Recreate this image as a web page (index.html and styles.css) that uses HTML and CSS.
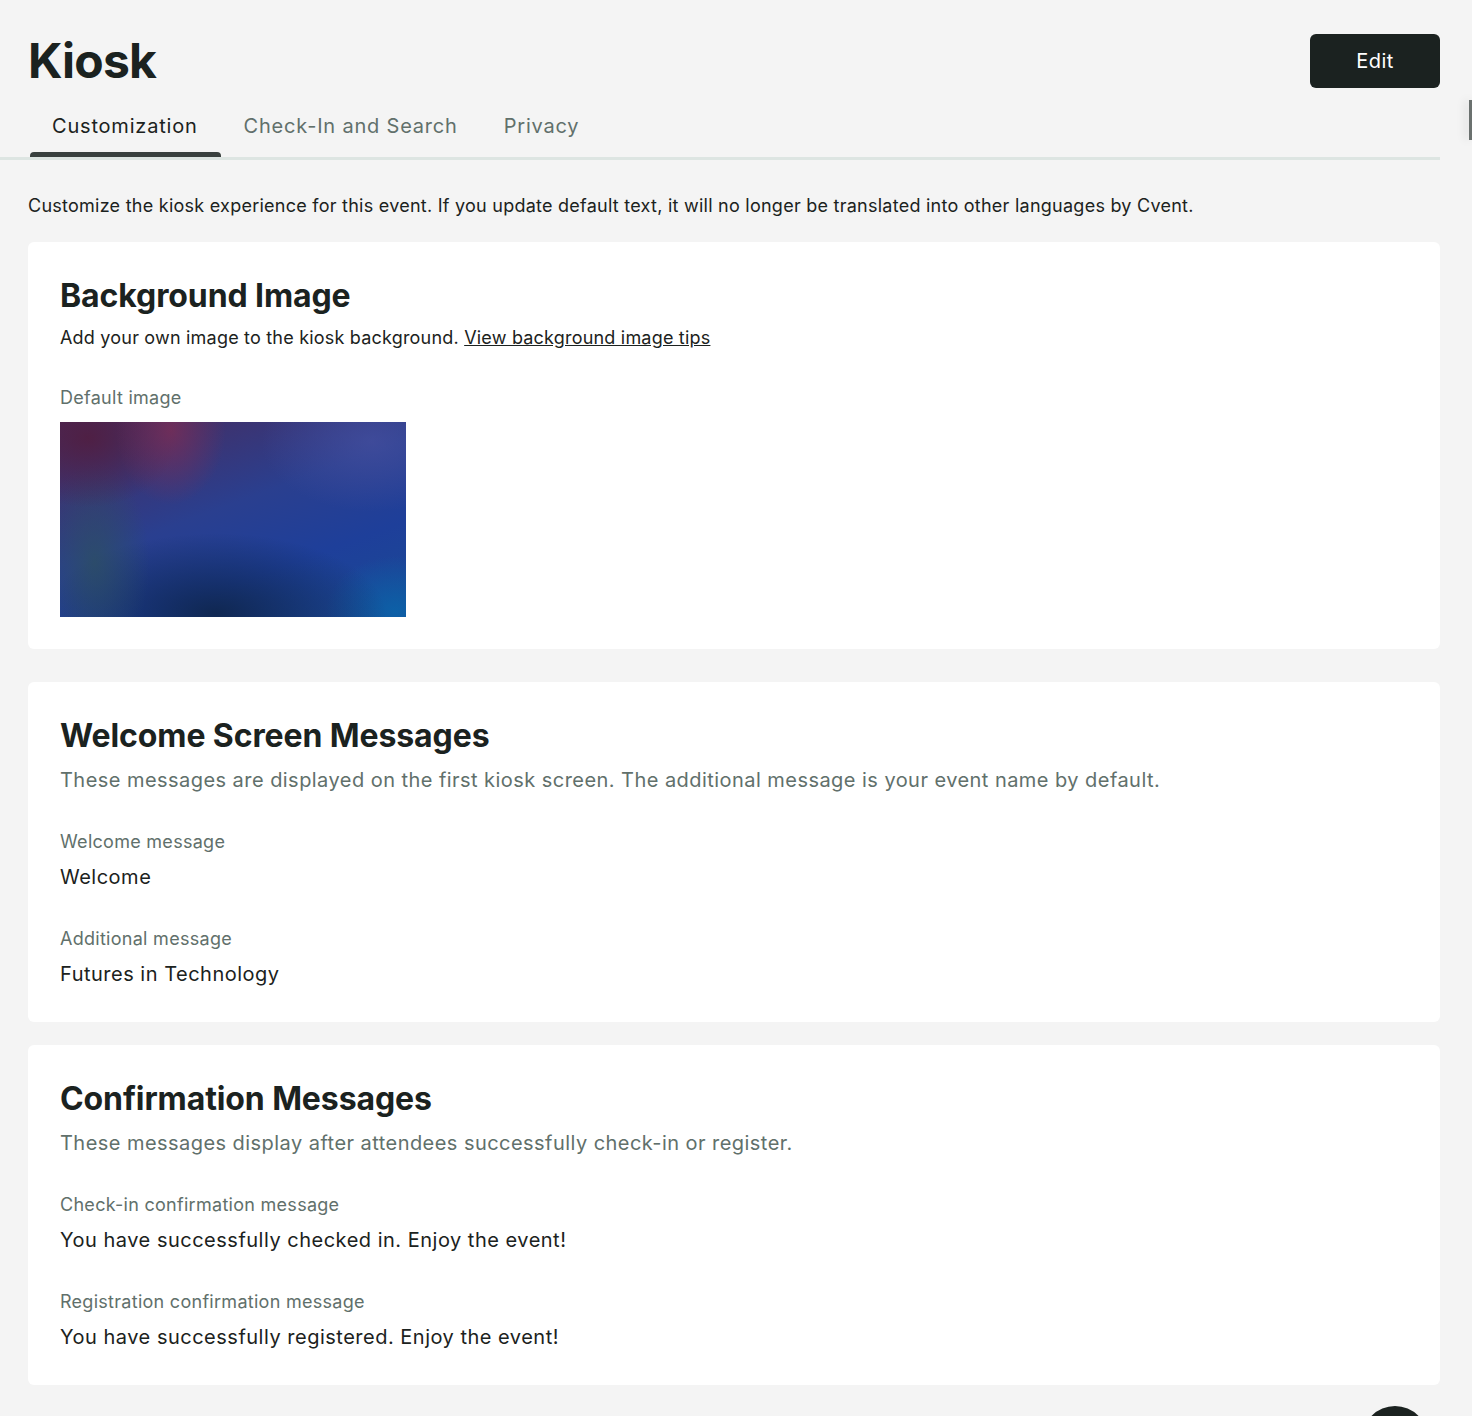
FILE: index.html
```html
<!DOCTYPE html>
<html lang="en">

<head>
    <meta charset="UTF-8" />
    <meta name="viewport" content="width=device-width, initial-scale=1.0" />
    <title>Kiosk</title>
    <link rel="stylesheet" href="styles.css">
</head>

<body>
    <!-- page header -->
    <div class="page-header">
        <h1 class="page-title">Kiosk</h1>
        <button class="edit-btn">Edit</button>
    </div>

    <!-- tabs -->
    <div class="tab-row">
        <button class="tab active">Customization</button>
        <button class="tab">Check-In and Search</button>
        <button class="tab">Privacy</button>
    </div>

    <div class="side-handle"></div>

    <div class="content">
        <p class="intro">Customize the kiosk experience for this event. If you update default text, it will no longer be translated into other languages by Cvent.</p>

        <!-- background image card -->
        <section class="card card-bg">
            <h2 class="card-title">Background Image</h2>
            <p class="card-sub dark">Add your own image to the kiosk background. <a href="#" class="tips-link">View background image tips</a></p>
            <div class="field-label img-label">Default image</div>
            <div class="bg-preview"></div>
        </section>

        <!-- welcome card -->
        <section class="card card-welcome">
            <h2 class="card-title">Welcome Screen Messages</h2>
            <p class="card-sub">These messages are displayed on the first kiosk screen. The additional message is your event name by default.</p>
            <div class="field">
                <div class="field-label">Welcome message</div>
                <div class="field-value">Welcome</div>
            </div>
            <div class="field">
                <div class="field-label">Additional message</div>
                <div class="field-value">Futures in Technology</div>
            </div>
        </section>

        <!-- confirmation card -->
        <section class="card card-confirm">
            <h2 class="card-title">Confirmation Messages</h2>
            <p class="card-sub">These messages display after attendees successfully check-in or register.</p>
            <div class="field">
                <div class="field-label">Check-in confirmation message</div>
                <div class="field-value">You have successfully checked in. Enjoy the event!</div>
            </div>
            <div class="field">
                <div class="field-label">Registration confirmation message</div>
                <div class="field-value">You have successfully registered. Enjoy the event!</div>
            </div>
        </section>
    </div>

    <div class="help-fab"></div>
</body>

</html>
```

FILE: styles.css
```css
html,
body {
    margin: 0;
    height: 100%;
    overflow: hidden;
}

body {
    background-color: #f4f4f4;
    color: #1b2220;
    font-family: Inter, Roboto, sans-serif;
    position: relative;
}

.page-header {
    display: flex;
    justify-content: space-between;
    align-items: flex-start;
    height: 54px;
    padding: 34px 32px 0 28px;
}

.page-title {
    margin: 0;
    font-size: 48px;
    font-weight: 700;
    line-height: 54px;
    letter-spacing: -0.8px;
}

.edit-btn {
    background-color: #1b2220;
    color: #ffffff;
    border: none;
    border-radius: 6px;
    width: 130px;
    height: 54px;
    font-family: inherit;
    font-size: 20px;
    letter-spacing: 0.4px;
    cursor: pointer;
}

.tab-row {
    display: flex;
    margin-right: 32px;
    padding: 26px 0 0 30px;
    border-bottom: 3px solid #dde5e2;
}

.tab {
    all: unset;
    position: relative;
    padding: 0 23px 19px 22px;
    margin-right: 1px;
    font-size: 20px;
    line-height: 24px;
    letter-spacing: 0.8px;
    color: #61706b;
    cursor: pointer;
}

.tab.active {
    color: #1b2220;
}

.tab.active::after {
    content: "";
    position: absolute;
    left: 0;
    right: 0;
    bottom: 0;
    height: 5px;
    border-radius: 4px 4px 0 0;
    background-color: #39403e;
}

.side-handle {
    position: absolute;
    top: 100px;
    right: 0;
    width: 3px;
    height: 40px;
    background-color: #6b716f;
    box-shadow: -3px 0 10px rgba(0, 0, 0, 0.15);
}

.content {
    padding: 0 32px 0 28px;
}

.intro {
    margin: 34px 0 24px 0;
    font-size: 18px;
    line-height: 24px;
    letter-spacing: 0.25px;
}

.card {
    background-color: #ffffff;
    border-radius: 6px;
    padding: 36px 32px 34px 32px;
}

.card-bg {
    padding-bottom: 32px;
    margin-bottom: 33px;
}

.card-welcome {
    margin-bottom: 23px;
}

.card-title {
    margin: 0;
    font-size: 32px;
    line-height: 36px;
    font-weight: 700;
    letter-spacing: -0.1px;
}

.card-sub {
    margin: 12px 0 0 0;
    font-size: 20px;
    line-height: 28px;
    letter-spacing: 0.45px;
    color: #61706b;
}

.card-sub.dark {
    margin-top: 10px;
    font-size: 18px;
    letter-spacing: 0.2px;
    color: #1b2220;
}

.tips-link {
    color: #1b2220;
}

.field-label {
    font-size: 18px;
    line-height: 24px;
    letter-spacing: 0.28px;
    color: #61706b;
}

.img-label {
    margin-top: 34px;
}

.field {
    margin-top: 36px;
}

.field-value {
    margin-top: 9px;
    font-size: 20px;
    line-height: 28px;
    letter-spacing: 0.5px;
}

.bg-preview {
    margin-top: 12px;
    width: 346px;
    height: 195px;
    background-color: #1d3a86;
    background-image:
        radial-gradient(ellipse 55px 75px at 32% 4%, rgba(125, 45, 85, 0.75), transparent),
        radial-gradient(ellipse 90px 70px at 8% 8%, rgba(80, 30, 65, 0.9), transparent),
        radial-gradient(ellipse 55px 100px at 10% 72%, rgba(45, 80, 95, 0.75), transparent),
        radial-gradient(ellipse 170px 80px at 45% 98%, rgba(15, 38, 78, 0.95), transparent),
        radial-gradient(ellipse 70px 55px at 97% 97%, rgba(10, 100, 170, 0.85), transparent),
        radial-gradient(ellipse 110px 70px at 90% 10%, rgba(70, 80, 160, 0.7), transparent),
        linear-gradient(160deg, #4a2a5a 0%, #2a3f8f 45%, #1e3f9a 70%, #1a4a95 100%);
}

.help-fab {
    position: absolute;
    left: 1362px;
    top: 1406px;
    width: 66px;
    height: 66px;
    border-radius: 50%;
    background-color: #1b2220;
}
```
